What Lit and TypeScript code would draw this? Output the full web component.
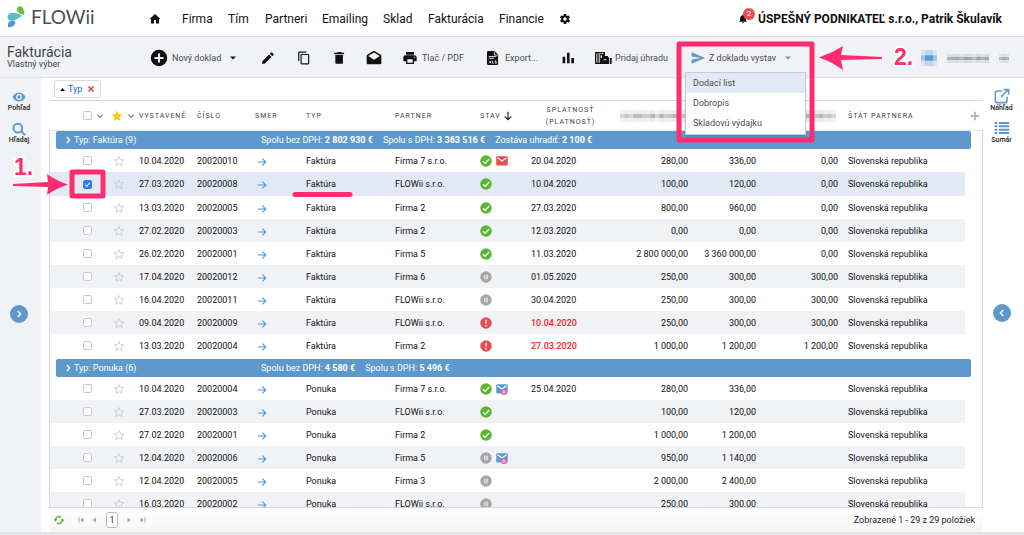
import { LitElement, html, css, svg, nothing } from "lit";
import { customElement, state } from "lit/decorators.js";
import { classMap } from "lit/directives/class-map.js";

type Status = "ok" | "wait" | "late";
type Mail = "" | "sent" | "opened";

interface Doc {
  date: string;
  no: string;
  partner: string;
  status: Status;
  mail: Mail;
  due: string;
  net: string;
  gross: string;
  open: string;
}

interface Group {
  type: string;
  count: number;
  totals: [string, string][];
  docs: Doc[];
}

const doc = (date: string, no: string, partner: string, status: Status, due: string,
  net: string, gross: string, open: string, mail: Mail = ""): Doc =>
  ({ date, no, partner, status, due, net, gross, open, mail });

const GROUPS: Group[] = [
  {
    type: "Faktúra",
    count: 9,
    totals: [
      ["Spolu bez DPH:", "2 802 930 €"],
      ["Spolu s DPH:", "3 363 516 €"],
      ["Zostáva uhradiť:", "2 100 €"],
    ],
    docs: [
      doc("10.04.2020", "20020010", "Firma 7 s.r.o.", "ok", "20.04.2020", "280,00", "336,00", "0,00", "sent"),
      doc("27.03.2020", "20020008", "FLOWii s.r.o.", "ok", "10.04.2020", "100,00", "120,00", "0,00"),
      doc("13.03.2020", "20020005", "Firma 2", "ok", "27.03.2020", "800,00", "960,00", "0,00"),
      doc("27.02.2020", "20020003", "Firma 2", "ok", "12.03.2020", "0,00", "0,00", "0,00"),
      doc("26.02.2020", "20020001", "Firma 5", "ok", "11.03.2020", "2 800 000,00", "3 360 000,00", "0,00"),
      doc("17.04.2020", "20020012", "Firma 6", "wait", "01.05.2020", "250,00", "300,00", "300,00"),
      doc("16.04.2020", "20020011", "FLOWii s.r.o.", "wait", "30.04.2020", "250,00", "300,00", "300,00"),
      doc("09.04.2020", "20020009", "FLOWii s.r.o.", "late", "10.04.2020", "250,00", "300,00", "300,00"),
      doc("13.03.2020", "20020004", "Firma 2", "late", "27.03.2020", "1 000,00", "1 200,00", "1 200,00"),
    ],
  },
  {
    type: "Ponuka",
    count: 6,
    totals: [
      ["Spolu bez DPH:", "4 580 €"],
      ["Spolu s DPH:", "5 496 €"],
    ],
    docs: [
      doc("10.04.2020", "20020004", "Firma 7 s.r.o.", "ok", "25.04.2020", "280,00", "336,00", "", "opened"),
      doc("27.03.2020", "20020003", "FLOWii s.r.o.", "ok", "", "100,00", "120,00", ""),
      doc("27.02.2020", "20020001", "Firma 2", "ok", "", "1 000,00", "1 200,00", ""),
      doc("12.04.2020", "20020006", "Firma 5", "wait", "", "950,00", "1 140,00", "", "opened"),
      doc("12.04.2020", "20020005", "Firma 3", "wait", "", "2 000,00", "2 400,00", ""),
      doc("16.03.2020", "20020002", "FLOWii s.r.o.", "wait", "", "250,00", "300,00", ""),
    ],
  },
];

const PATHS: Record<string, string> = {
  home: "M10 21v-7h4v7h6v-9h3L12 2 1 12h3v9z",
  gear: "M19.4 13a7.500 7.500 0 0 0 0-2l2.100-1.700a.5.5 0 0 0 .1-.6l-2-3.500a.5.5 0 0 0-.6-.2l-2.500 1a7.300 7.300 0 0 0-1.700-1l-.4-2.600a.5.5 0 0 0-.5-.4h-4a.5.5 0 0 0-.5.4L9.100 5a7.700 7.700 0 0 0-1.700 1l-2.500-1a.5.5 0 0 0-.6.2l-2 3.500a.5.5 0 0 0 .1.6L4.600 11a8 8 0 0 0 0 2l-2.100 1.700a.5.5 0 0 0-.1.600l2 3.500c.1.200.4.300.6.200l2.500-1a7.300 7.300 0 0 0 1.700 1l.4 2.600c0 .2.200.4.500.4h4c.2 0 .5-.2.500-.4l.4-2.600a7.700 7.700 0 0 0 1.700-1l2.500 1c.2.100.500 0 .6-.2l2-3.500a.5.5 0 0 0-.1-.6zM12 15.500a3.500 3.500 0 1 1 0-7 3.500 3.500 0 0 1 0 7z",
  add: "M12 1a11 11 0 1 0 0 22 11 11 0 0 0 0-22zm6 12.300h-4.700V18h-2.600v-4.700H6v-2.600h4.700V6h2.600v4.700H18z",
  pencil: "M2 17.800V22h4.200L18 10.200 13.800 6zM21.500 6.700a1.200 1.200 0 0 0 0-1.600l-2.600-2.600a1.200 1.200 0 0 0-1.600 0l-2.200 2.200 4.200 4.200z",
  copy: "M16 1H4a2 2 0 0 0-2 2v14h2V3h12zm3 4H8a2 2 0 0 0-2 2v14c0 1.100.9 2 2 2h11a2 2 0 0 0 2-2V7a2 2 0 0 0-2-2zm0 16H8V7h11z",
  trash: "M4 7v13a2 2 0 0 0 2 2h9a2 2 0 0 0 2-2V7zM19 3h-4l-1-1.500H8L7 3H2v2.500h17z",
  mailOpen: "M23 9c0-.7-.4-1.400-.9-1.700L12 1.200 1.900 7.300C1.400 7.600 1 8.300 1 9v10.500c0 1.100.9 2 2 2h18a2 2 0 0 0 2-2zM12 14.500 3.300 9 12 3.700 20.700 9z",
  print: "M19 8H5a3 3 0 0 0-3 3v6h4v4h12v-4h4v-6a3 3 0 0 0-3-3zm-3 11H8v-5h8zm3-7a1 1 0 1 1 0-2 1 1 0 0 1 0 2zM18 3H6v4h12z",
  chart: "M1 10h4.500v11H1zm7.500-7H13v18H8.500zm7.500 9h4.500v9H16z",
  send: "M1 22 24 12 1 2v7.500L17 12 1 14.500z",
  eye: "M12 4.500C7 4.500 2.700 7.600 1 12c1.700 4.400 6 7.500 11 7.500s9.300-3.100 11-7.500c-1.700-4.400-6-7.500-11-7.500zM12 17a5 5 0 1 1 0-10 5 5 0 0 1 0 10zm0-8a3 3 0 1 0 0 6 3 3 0 0 0 0-6z",
  list: "M1 3h4v3H1zm6 0h16v3H7zM1 8h4v3H1zm6 0h16v3H7zM1 13h4v3H1zm6 0h16v3H7zm-6 5h4v3H1zm6 0h16v3H7z",
  starFull: "M12 17.800 18.800 22 17 14.200l6-5.200-7.900-.7L12 1 8.900 8.300 1 9l6 5.200L5.200 22z",
  bell: "M12 22c1.500 0 2.500-1 2.500-2.200h-5C9.500 21 10.500 22 12 22zm7-6v-5.500c0-3.500-2-6-5-6.800V3a2 2 0 0 0-4 0v.7c-3 .8-5 3.300-5 6.800V16l-2.500 2.500h19z",
};

const STROKES: Record<string, string> = {
  down: "M4 8 12 16 20 8",
  right: "M8 3 17 12 8 21",
  left: "M16 3 7 12 16 21",
  arrow: "M2 12H21M13 4 21 12 13 20",
  sortDown: "M12 2V21M4 13 12 21 20 13",
  search: "M16 16 22.500 22.500M10 3a7.500 7.500 0 1 0 0 15 7.500 7.500 0 0 0 0-15",
  open: "M12 4.500H5a3 3 0 0 0-3 3V19a3 3 0 0 0 3 3h11.500a3 3 0 0 0 3-3v-6M10.500 13.500 21 3M14.500 2.500H22V10",
  star: "M12 17.300 17.800 21 16.300 14.200 21.500 9.800 14.700 9.200 12 3 9.300 9.200 2.500 9.800 7.700 14.200 6.200 21z",
  plus: "M12 2V22M2 12H22",
};

const solid = (name: string, cls: string) =>
  html`<svg class="ico ${cls}" viewBox="0 0 24 24" aria-hidden="true"><path fill="currentColor" fill-rule="evenodd" d=${PATHS[name]}></path></svg>`;

const line = (name: string, cls: string, width = 2) =>
  html`<svg class="ico ${cls}" viewBox="0 0 24 24" aria-hidden="true"><path fill="none" stroke="currentColor" stroke-width=${width} d=${STROKES[name]}></path></svg>`;

const caret = html`<svg class="ico s6" viewBox="0 0 12 12" aria-hidden="true"><path fill="currentColor" d="M0 3h12L6 9z"></path></svg>`;

/* A strip of grey tiles that stands for a hidden value. */
const mosaic = (cls: string, tones: number[], blue = false) => html`
  <svg class="ico ${cls}" viewBox="0 0 ${tones.length * 4} 12" preserveAspectRatio="none" aria-hidden="true">
    ${tones.map((t, i) => svg`
      <rect x=${i * 4} y="0" width="4" height="12" fill=${blue ? "#5b9bd5" : "#777"} opacity=${t / 300}></rect>
      <rect x=${i * 4} y="4" width="4" height="4" fill=${blue ? "#5b9bd5" : "#777"} opacity=${t / 100}></rect>`)}
  </svg>`;

const STATUS_TITLE: Record<Status, string> = { ok: "Uhradené", wait: "Čaká", late: "Po splatnosti" };

const statusIcon = (s: Status) => html`
  <svg class="ico s12" viewBox="0 0 24 24" role="img" aria-label=${STATUS_TITLE[s]}>
    ${s === "ok" ? svg`<circle cx="12" cy="12" r="11.500" fill="#5cb531"></circle><path d="M6 12.500 10.300 16.700 18.300 8" fill="none" stroke="#fff" stroke-width="2.600"></path>`
      : s === "wait" ? svg`<circle cx="12" cy="12" r="11.500" fill="#a6a6a6"></circle><path d="M9.700 7.500v9M14.300 7.500v9" stroke="#e8e8e8" stroke-width="2.800"></path>`
      : svg`<circle cx="12" cy="12" r="11.500" fill="#e84c4c"></circle><path d="M12 5.500v8M12 16v2.800" stroke="#fff" stroke-width="2.800"></path>`}
  </svg>`;

const mailIcon = (m: Mail) => m === "" ? nothing : html`
  <svg class="ico s12" viewBox="0 0 24 24" aria-hidden="true">
    <rect x="0.500" y="2.500" width="23" height="18.500" rx="2" fill=${m === "sent" ? "#e84c4c" : "#5b9bd5"}></rect>
    <path d="M3 5.500 12 12 21 5.500" fill="none" stroke="#fff" stroke-width="2.200"></path>
    ${m === "opened" ? svg`<circle cx="16" cy="18" r="6" fill="#e0569f"></circle><circle cx="16" cy="18" r="2.500" fill="none" stroke="#fff" stroke-width="1.500"></circle>` : nothing}
  </svg>`;

const COLS = ["c-sel", "c-fav", "c-58", "c-58", "c-dir", "c-typ", "c-par", "c-dir", "c-due", "c-net", "c-grs", "c-opn", "c-cty", "c-end"];
const colgroup = html`<colgroup>${COLS.map((c) => html`<col class=${c}>`)}</colgroup>`;

@customElement("app-root")
export class AppRoot extends LitElement {
  @state() private selected = new Set<string>(["Faktúra-20020008"]);

  static styles = css`
    :host {
      display: flex;
      flex-direction: column;
      position: relative;
      height: 100vh;
      overflow: hidden;
      background: #fff;
      color: #111;
      font: 9px/12px Roboto, "Noto Sans", sans-serif;
      --blue: #5e99cd;
      --grey: #f0f2f6;
      --pink: #ff2d6f;
    }
    * { box-sizing: border-box; }
    button {
      font: inherit;
      color: inherit;
      background: none;
      border: 0;
      padding: 0;
      margin: 0;
      display: inline-flex;
      align-items: center;
      text-align: left;
      cursor: pointer;
      white-space: nowrap;
    }
    a { color: inherit; text-decoration: none; }
    .ico { display: block; flex: none; overflow: visible; }
    .s6 { width: 6px; height: 6px; }
    .s8 { width: 8px; height: 8px; }
    .s10 { width: 10px; height: 10px; }
    .s12 { width: 12px; height: 12px; }
    .s14 { width: 14px; height: 14px; }
    .s16 { width: 16px; height: 16px; }
    .s18 { width: 18px; height: 18px; }

    .top {
      flex: none;
      display: flex;
      align-items: center;
      height: 37px;
      padding: 2px 22px 0 7px;
      border-bottom: 1px solid #dcdee2;
      color: #111;
    }
    .logo { display: flex; align-items: center; width: 142px; gap: 6px; padding-bottom: 4px; }
    .logo-mark { width: 18px; height: 22px; }
    .logo-text { font: 19px/24px Lato, sans-serif; color: #4d4d4f; }
    .nav {
      display: grid;
      grid-template-columns: 33px 46px 37px 57px 61px 45px 71px 60px 14px;
      align-items: center;
      font-size: 12px;
      line-height: 16px;
      white-space: nowrap;
    }
    .user { display: flex; align-items: center; gap: 3px; margin-left: auto; font-size: 12px; line-height: 16px; font-weight: 700; white-space: nowrap; }
    .bell { position: relative; display: block; padding-right: 7px; }
    .badge {
      position: absolute;
      left: 5px;
      top: -6px;
      width: 12px;
      height: 12px;
      border-radius: 50%;
      background: #ee4e50;
      color: #fff;
      font: 8px/12px Roboto, sans-serif;
      text-align: center;
    }

    .tools {
      flex: none;
      display: grid;
      grid-template-columns: 143px 111px 36px 36px 33px 36px 85px 75px 33px 96px 110px 1fr auto;
      align-items: center;
      height: 41px;
      padding: 2px 15px 0 7px;
      background: var(--grey);
      border-bottom: 1px solid #e2e3e7;
      color: #111;
    }
    .label { color: #4c4c4c; }
    .heading { padding-bottom: 2px; }
    .title { margin: 0; font-size: 14px; line-height: 15px; font-weight: 400; color: #444; }
    .subtitle { color: #444; line-height: 9px; }
    .g4 { gap: 4px; }
    .drop .label { margin-right: 5px; }
    .blue { color: var(--blue); }
    .hidden-user { display: flex; align-items: center; gap: 10px; }
    .m16 { width: 16px; height: 16px; }
    .m42 { width: 42px; height: 9px; }
    .m10 { width: 10px; height: 9px; }
    .m70 { width: 70px; height: 12px; }
    .issue { position: relative; display: flex; align-items: center; }
    .menu {
      position: absolute;
      z-index: 2;
      left: -6px;
      top: 21px;
      width: 121px;
      margin: 0;
      padding: 0 0 1px;
      list-style: none;
      background: #fff;
      border: 1px solid #c8ccd2;
      box-shadow: 0 1px 2px rgba(0, 0, 0, 0.2);
      color: #4c4c4c;
    }
    .menu li { display: flex; }
    .menu button { width: 100%; height: 20px; padding: 0 7px; }
    .menu .active { background: #e1eaf5; }

    .work { flex: 1; min-height: 0; display: flex; }
    .rail {
      flex: none;
      width: 41px;
      display: grid;
      grid-template-rows: 1fr auto 1fr;
      justify-items: center;
      color: var(--blue);
    }
    .rail-left { background: var(--grey); padding: 12px 3px 0 0; }
    .rail-right { padding: 10px 4px 0 0; }
    .rail-list { display: flex; flex-direction: column; gap: 10px; }
    .rail-right .rail-list { gap: 8px; }
    .rail-item { flex-direction: column; font-size: 7px; font-weight: 500; line-height: 8px; align-items: center; }
    .rail-item .label { color: #222; }
    .toggle {
      width: 18px;
      height: 18px;
      margin-top: 5px;
      border-radius: 50%;
      background: var(--blue);
      color: #fff;
      justify-content: center;
    }

    .main { flex: 1; min-width: 0; display: flex; flex-direction: column; padding-left: 8px; }
    .chips { flex: none; height: 22px; padding: 2px 5px; }
    .chip {
      display: inline-flex;
      align-items: center;
      height: 18px;
      padding: 0 6px 0 5px;
      border: 1px solid #dadada;
      border-radius: 3px;
      color: #1f66d6;
    }
    .chip-up { width: 5px; height: 3px; color: #111; margin-right: 3px; }
    .chip-x { color: #e23c3c; margin-left: 6px; }

    table { width: 100%; table-layout: fixed; border-collapse: separate; border-spacing: 0; }
    .c-sel { width: 61px; }
    .c-fav { width: 28px; }
    .c-58 { width: 58px; }
    .c-dir { width: 51px; }
    .c-typ { width: 89px; }
    .c-par { width: 85px; }
    .c-due { width: 79px; }
    .c-net { width: 78px; }
    .c-grs { width: 68px; }
    .c-opn { width: 82px; }
    .c-end { width: 17px; }
    th, td { padding: 0; text-align: left; vertical-align: middle; white-space: nowrap; font-weight: 400; }

    .head { flex: none; border-top: 1px solid #d5d7da; padding: 0 1px; }
    .head th { height: 29px; font-size: 7px; line-height: 12px; letter-spacing: 1px; color: #444; }
    .head .mid { text-align: center; white-space: normal; }
    .head .with-icon { display: flex; align-items: center; gap: 2px; }
    .head .sort { color: #222; }
    .head .check-head { padding-left: 33px; }
    .head .gap5 { display: flex; align-items: center; gap: 4px; }
    .head .chev { color: #777; }
    .head .gold { color: #ffcb05; }
    .head .plus { color: #bbb; padding-left: 5px; }

    .body { flex: 1; min-height: 0; overflow: hidden; border: 1px solid #d5d7da; border-top-color: #e2e4e8; }
    .body td { height: 23px; }
    .num { text-align: right; }
    .check { padding-left: 33px; }
    .fav { padding-left: 2px; color: #c4c4c4; }
    .dir { padding-left: 2px; color: #4f97d6; }
    .dir .ico { margin-top: 2px; }
    .cty { padding-left: 10px; }
    .states { display: flex; gap: 4px; }
    .body .overdue { color: #f5252a; font-weight: 500; }
    .alt td:not(.end) { background: var(--grey); }
    .picked td:not(.end) { background: #e1eaf4; }
    .picked td { height: 24px; }
    tbody + tbody .bar { margin-top: 2px; }
    .bar {
      display: flex;
      align-items: center;
      gap: 10px;
      height: 18px;
      margin: 0 11px 0 6px;
      padding: 0 8px;
      border-radius: 2px;
      background: var(--blue);
      color: #fff;
    }
    .bar button { width: 187px; gap: 2px; }
    .bar b { font-weight: 700; }

    input[type="checkbox"] {
      appearance: none;
      display: block;
      width: 9px;
      height: 9px;
      margin: 0;
      border: 1px solid #c9c9c9;
      border-radius: 2px;
      background: #fff;
    }
    input[type="checkbox"]:checked {
      border-color: #2f7cf6;
      background: #2f7cf6 url("data:image/svg+xml,%3Csvg xmlns='http://www.w3.org/2000/svg' viewBox='0 0 10 10'%3E%3Cpath d='M2 5.500 4.200 7.700 8 2.500' fill='none' stroke='white' stroke-width='1.600'/%3E%3C/svg%3E") center / 100% no-repeat;
    }

    .foot {
      flex: none;
      display: flex;
      align-items: center;
      height: 24px;
      padding: 0 8px 0 5px;
      background: linear-gradient(#fff, #f6f6f7);
      color: #222;
    }
    .pager { display: flex; align-items: center; gap: 8px; color: #aaa; }
    .pager .reload { color: #56b32d; margin-right: 6px; }
    .page {
      width: 12px;
      height: 16px;
      justify-content: center;
      border: 1px solid #bbb;
      border-radius: 3px;
      color: #333;
      background: #fff;
    }
    .count { margin-left: auto; }
    .edge { flex: none; height: 3px; background: #e3e5ea; }

    .marks { position: absolute; z-index: 3; left: 0; top: 0; width: 100%; height: 100%; pointer-events: none; }
    .frame { fill: none; stroke: var(--pink); stroke-width: 5; stroke-linejoin: round; }
    .pointer { fill: var(--pink); }
    .under { stroke: var(--pink); stroke-width: 5; stroke-linecap: round; }
    .step { font: 700 23px "Liberation Sans", sans-serif; fill: var(--pink); stroke: #fff; stroke-width: 4; stroke-linejoin: round; paint-order: stroke; }
  `;

  private toggle(key: string) {
    const next = new Set(this.selected);
    if (!next.delete(key)) next.add(key);
    this.selected = next;
  }

  private renderTop() {
    return html`
      <header class="top">
        <a class="logo" href="#">
          <svg class="ico logo-mark" viewBox="0 0 18 22" aria-hidden="true">
            <path fill="#6cbf3f" d="M17.300 8.800C13 8.300 10 6.300 10 3.500 10 1.500 11.300 0.300 12.800 0.300 16 0.300 17.500 4.500 17.300 8.800z"></path>
            <path fill="#56bcc9" d="M15.200 10C12 8 8.500 6.800 5.500 6.800 2.500 6.800 0.500 8.500 0.500 10.800 0.500 13 2.300 14.700 4.800 14.700 9 14.700 11.500 11.500 15.200 10z"></path>
            <path fill="#5b93d0" d="M1.300 21.500C0 17.500 2 14.800 5.200 14.800 7 14.800 8.300 15.400 8.300 16.600 8.300 19.300 5.500 21.300 1.300 21.500z"></path>
          </svg>
          <span class="logo-text">FLOWii</span>
        </a>
        <nav class="nav" aria-label="Hlavné menu">
          <a href="#" aria-label="Domov">${solid("home", "s12")}</a>
          ${["Firma", "Tím", "Partneri", "Emailing", "Sklad", "Fakturácia", "Financie"].map((n) => html`<a href="#">${n}</a>`)}
          <a href="#" aria-label="Nastavenia">${solid("gear", "s12")}</a>
        </nav>
        <div class="user">
          <button class="bell" aria-label="Oznámenia">${solid("bell", "s10")}<span class="badge">2</span></button>
          <span>ÚSPEŠNÝ PODNIKATEĽ s.r.o., Patrik Škulavík</span>
        </div>
      </header>`;
  }

  private renderTools() {
    return html`
      <section class="tools">
        <div class="heading">
          <h1 class="title">Fakturácia</h1>
          <div class="subtitle">Vlastný výber</div>
        </div>
        <button class="drop g4">${solid("add", "s18")}<span class="label">Nový doklad</span>${caret}</button>
        <button aria-label="Upraviť">${solid("pencil", "s14")}</button>
        <button aria-label="Kopírovať">${solid("copy", "s14")}</button>
        <button aria-label="Vymazať">${solid("trash", "s14")}</button>
        <button aria-label="E-mail">${solid("mailOpen", "s16")}</button>
        <button class="g4">${solid("print", "s16")}<span class="label">Tlač / PDF</span></button>
        <button class="g4">
          <svg class="ico s14" viewBox="0 0 24 24" aria-hidden="true">
            <path fill="currentColor" d="M0 2a2 2 0 0 1 2-2h11l6 6v16a2 2 0 0 1-2 2H2a2 2 0 0 1-2-2z"></path>
            <path fill="none" stroke="#f0f2f6" stroke-width="1.500" d="M12.500 1v6h6M3 9.500h13M3 12.500h9M4 17l3 4M7 17l-3 4M9.500 17v4h2M16 17h-2v2h2v2h-2"></path>
          </svg>
          <span class="label">Export...</span>
        </button>
        <button aria-label="Grafy">${solid("chart", "s14")}</button>
        <button class="g4">
          <svg class="ico s16" viewBox="0 0 24 24" aria-hidden="true">
            <path fill="none" stroke="currentColor" stroke-width="2" d="M1 4h13v16H1zM4.500 4v16"></path>
            <path fill="currentColor" d="M7 6h7v3h5l2 3v9H7zM22.200 12H25v9h-2.800z"></path>
            <path fill="#f0f2f6" d="M13 14h4v1.500h-4zM8.500 8h2v4h-2z"></path>
          </svg>
          <span class="label">Pridaj úhradu</span>
        </button>
        <div class="issue">
          <button class="drop g4 blue" aria-haspopup="true" aria-expanded="true">${solid("send", "s14")}<span class="label">Z dokladu vystav</span>${caret}</button>
          <ul class="menu">
            <li><button class="active">Dodací list</button></li>
            <li><button>Dobropis</button></li>
            <li><button>Skladovú výdajku</button></li>
          </ul>
        </div>
        <span></span>
        <div class="hidden-user">${mosaic("m16", [45, 100, 100, 45], true)}${mosaic("m42", [45, 50, 55, 40, 60, 50, 35, 60, 45, 55])}${mosaic("m10", [35, 50, 40])}</div>
      </section>`;
  }

  private renderRow(group: Group, d: Doc, i: number) {
    const key = `${group.type}-${d.no}`;
    const picked = this.selected.has(key);
    return html`
      <tr class=${classMap({ alt: i % 2 === 1, picked })}>
        <td class="check"><input type="checkbox" aria-label="Vybrať ${d.no}" .checked=${picked} @change=${() => this.toggle(key)}></td>
        <td class="fav">${line("star", "s12", 1.6)}</td>
        <td>${d.date}</td>
        <td>${d.no}</td>
        <td class="dir">${line("arrow", "s10", 2.6)}</td>
        <td>${group.type}</td>
        <td>${d.partner}</td>
        <td><div class="states">${statusIcon(d.status)}${mailIcon(d.mail)}</div></td>
        <td class=${d.status === "late" ? "overdue" : ""}>${d.due}</td>
        <td class="num">${d.net}</td>
        <td class="num">${d.gross}</td>
        <td class="num">${d.open}</td>
        <td class="cty">Slovenská republika</td>
        <td class="end"></td>
      </tr>`;
  }

  private renderGrid() {
    return html`
      <table class="head">
        ${colgroup}
        <thead>
          <tr>
            <th class="check-head"><span class="gap5"><input type="checkbox" aria-label="Vybrať všetko">${line("down", "s8 chev", 3.4)}</span></th>
            <th><span class="gap5">${solid("starFull", "s12 gold")}${line("down", "s8 chev", 3.4)}</span></th>
            <th>VYSTAVENÉ</th>
            <th>ČÍSLO</th>
            <th>SMER</th>
            <th>TYP</th>
            <th>PARTNER</th>
            <th><span class="with-icon">STAV ${line("sortDown", "s10 sort", 2.8)}</span></th>
            <th class="mid">SPLATNOSŤ (PLATNOSŤ)</th>
            <th class="cty">${mosaic("m70", [25, 35, 25, 40, 40, 30, 30, 45, 25, 45, 30, 35, 45, 30, 35, 25])}</th>
            <th></th>
            <th class="cty">${mosaic("m70", [25, 35, 25, 40, 40, 30, 30, 45, 25, 45, 30, 35, 45, 30, 35, 25])}</th>
            <th class="cty">ŠTÁT PARTNERA</th>
            <th class="plus">${line("plus", "s10", 5)}</th>
          </tr>
        </thead>
      </table>
      <div class="body">
        <table>
          ${colgroup}
          ${GROUPS.map((g) => html`
            <tbody>
              <tr>
                <th colspan="14" scope="rowgroup">
                  <div class="bar">
                    <button aria-expanded="true">${line("right", "s8", 3.6)}Typ: ${g.type} (${g.count})</button>
                    ${g.totals.map(([k, v]) => html`<span>${k} <b>${v}</b></span>`)}
                  </div>
                </th>
              </tr>
              ${g.docs.map((d, i) => this.renderRow(g, d, i))}
            </tbody>`)}
        </table>
      </div>`;
  }

  private renderFoot() {
    const tri = (d: string, label: string) => html`
      <button aria-label=${label}><svg class="ico s6" viewBox="0 0 12 12" aria-hidden="true"><path fill="currentColor" d=${d}></path></svg></button>`;
    return html`
      <footer class="foot">
        <div class="pager">
          <button class="reload" aria-label="Obnoviť">
            <svg class="ico s10" viewBox="0 0 24 24" aria-hidden="true">
              <path fill="none" stroke="currentColor" stroke-width="3.500" d="M3.500 12A8.500 8.500 0 0 1 17 5.200M20.500 12A8.500 8.500 0 0 1 7 18.800"></path>
              <path fill="currentColor" d="M-1 10h9l-4.500 6zM25 14h-9l4.500-6z"></path>
            </svg>
          </button>
          ${tri("M1 1h2v10H1zM11 1v10L4 6z", "Prvá")}
          ${tri("M8 1v10L1 6z", "Predošlá")}
          <button class="page" aria-current="page">1</button>
          ${tri("M3 1v10L10 6z", "Ďalšia")}
          ${tri("M1 1v10L8 6zM9 1h2v10H9z", "Posledná")}
        </div>
        <span class="count">Zobrazené 1 - 29 z 29 položiek</span>
      </footer>`;
  }

  render() {
    return html`
      ${this.renderTop()}
      ${this.renderTools()}
      <div class="work">
        <aside class="rail rail-left">
          <div class="rail-list">
            <button class="rail-item">${solid("eye", "s14")}<span class="label">Pohľad</span></button>
            <button class="rail-item">${line("search", "s14", 3.4)}<span class="label">Hľadaj</span></button>
          </div>
          <button class="toggle" aria-label="Rozbaliť ľavý panel">${line("right", "s8", 4)}</button>
        </aside>
        <main class="main">
          <div class="chips">
            <span class="chip">
              <svg class="ico chip-up" viewBox="0 0 10 6" aria-hidden="true"><path fill="currentColor" d="M0 6h10L5 0z"></path></svg>
              Typ
              <button class="chip-x" aria-label="Zrušiť zoskupenie">
                <svg class="ico s6" viewBox="0 0 12 12" aria-hidden="true"><path stroke="currentColor" stroke-width="3" d="M1 1 11 11M11 1 1 11"></path></svg>
              </button>
            </span>
          </div>
          ${this.renderGrid()}
          ${this.renderFoot()}
        </main>
        <aside class="rail rail-right">
          <div class="rail-list">
            <button class="rail-item">${line("open", "s16", 2.4)}<span class="label">Náhľad</span></button>
            <button class="rail-item">${solid("list", "s16")}<span class="label">Sumár</span></button>
          </div>
          <button class="toggle" aria-label="Rozbaliť pravý panel">${line("left", "s8", 4)}</button>
        </aside>
      </div>
      <div class="edge"></div>
      <svg class="marks" aria-hidden="true">
        <rect class="frame" x="72" y="172" width="31" height="24"></rect>
        <rect class="frame" x="679" y="44" width="133" height="96"></rect>
        <path class="pointer" d="M13 184 48 182 47 174Q57 181 68 184.500 57 188 47 195L48 187 13 186z"></path>
        <path class="pointer" d="M882 57 841 55 843 46Q832 53 819 57.500 832 62 843 70L841 60 882 59z"></path>
        <path class="under" d="M295 194.500H350"></path>
        <text class="step" x="14" y="175">1.</text>
        <text class="step" x="894" y="65">2.</text>
      </svg>`;
  }
}
